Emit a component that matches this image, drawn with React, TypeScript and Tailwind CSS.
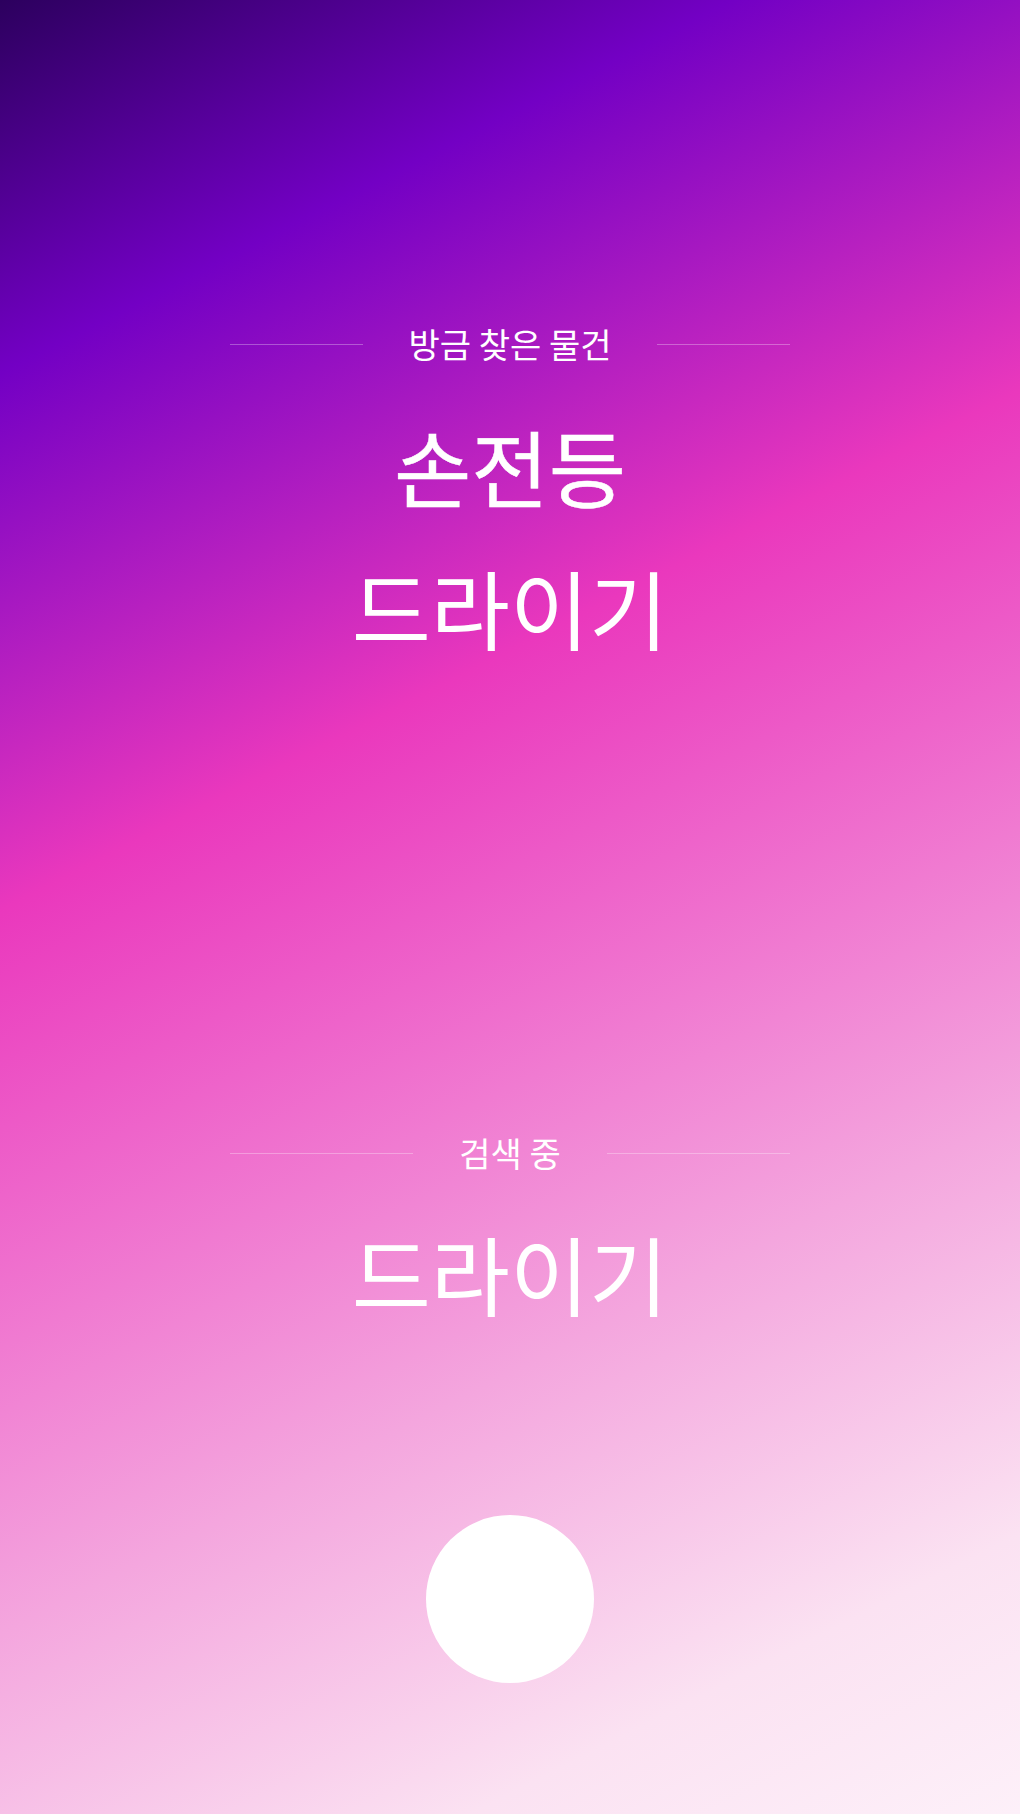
const font = {
  fontFamily: '"Noto Sans CJK KR", "Noto Sans", sans-serif',
};

const Divider = ({ label }: { label: string }) => {
  return (
    <div className="flex w-[560px] items-center h-[40px]">
      <div className="h-px flex-1 bg-white/30" />
      <span className="px-[46px] text-[34px] leading-[40px] text-white">
        {label}
      </span>
      <div className="h-px flex-1 bg-white/30" />
    </div>
  );
};

const App = () => {
  return (
    <div
      style={font}
      className="flex h-[1814px] w-full flex-col items-center bg-[linear-gradient(153deg,#2c005e_0%,#7300c4_16%,#ea38bd_39%,#f4a6de_70%,#fbe2f2_88%,#fdf0f9_100%)]"
    >
      <div className="mt-[324px]">
        <Divider label="방금 찾은 물건" />
      </div>

      <h1 className="mt-[62px] flex h-[80px] items-center text-[84px] font-normal leading-none text-white [-webkit-text-stroke:0.5px_white]">
        손전등
      </h1>
      <p className="mt-[61px] flex h-[80px] items-center text-[86px] font-normal leading-none text-white">
        드라이기
      </p>

      <div className="mt-[486px]">
        <Divider label="검색 중" />
      </div>

      <p className="mt-[60px] flex h-[80px] items-center text-[86px] font-normal leading-none text-white">
        드라이기
      </p>

      <button className="mt-[202px] h-[168px] w-[168px] rounded-full bg-white" />
    </div>
  );
};

export default App;
